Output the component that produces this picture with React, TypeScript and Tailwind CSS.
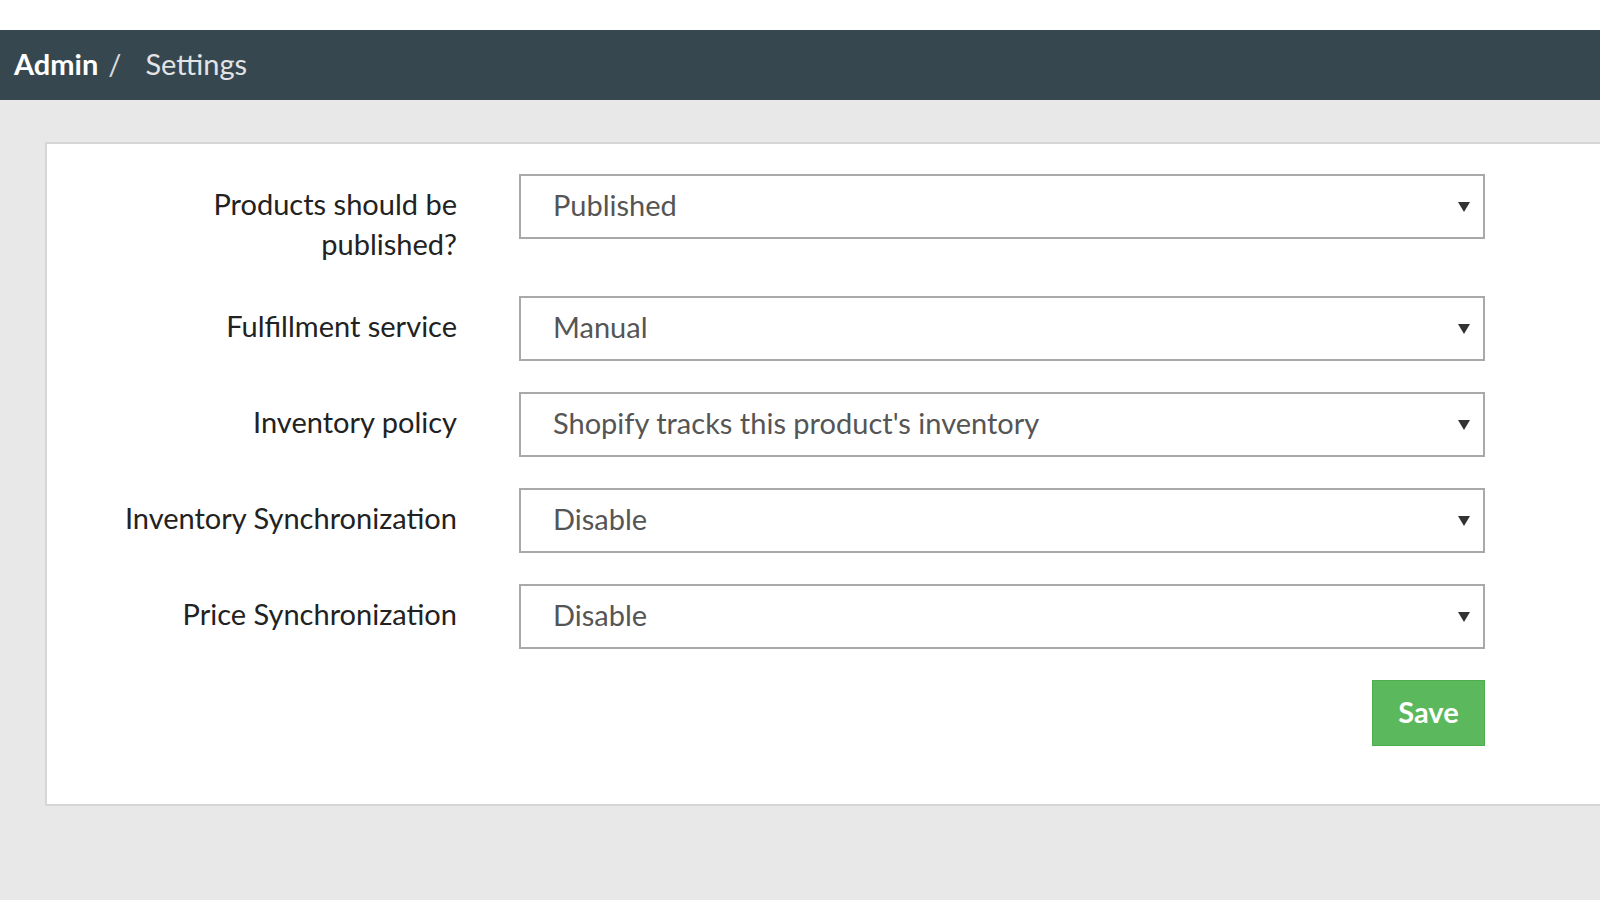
import { useState } from 'react'

const FIELDS: { label: string; options: string[] }[] = [
  { label: 'Products should be published?', options: ['Published', 'Unpublished'] },
  { label: 'Fulfillment service', options: ['Manual'] },
  {
    label: 'Inventory policy',
    options: ["Shopify tracks this product's inventory", "Don't track inventory"],
  },
  { label: 'Inventory Synchronization', options: ['Disable', 'Enable'] },
  { label: 'Price Synchronization', options: ['Disable', 'Enable'] },
]

function SelectField({ options }: { options: string[] }) {
  const [value, setValue] = useState(options[0])
  return (
    <div className="relative h-[65px] w-[966px] shrink-0 border-2 border-[#a9a9a9] bg-white">
      <select
        value={value}
        onChange={(e) => setValue(e.target.value)}
        className="h-full w-full appearance-none bg-transparent pb-[4px] pl-[32px] pr-[50px] text-[29px] text-[#555] outline-none"
      >
        {options.map((o) => (
          <option key={o}>{o}</option>
        ))}
      </select>
      {/* caret */}
      <svg
        className="pointer-events-none absolute right-[13px] top-[26px]"
        width="12"
        height="10"
        viewBox="0 0 12 10"
      >
        <path d="M0 0 L12 0 L6 10 Z" fill="#333" />
      </svg>
    </div>
  )
}

export default function App() {
  return (
    <div
      className="min-h-[900px] overflow-hidden bg-[#e8e8e8]"
      style={{ fontFamily: 'Lato, "Open Sans", sans-serif' }}
    >
      <div className="h-[30px] bg-white" />
      <header className="flex h-[70px] items-center bg-[#37474f] pb-[2px] pl-[14px] text-[29px]">
        <span className="font-bold text-white">Admin</span>
        <span className="ml-[10px] text-[#d8dcde]">/</span>
        <span className="ml-[24px] text-[#e2e4e5]">Settings</span>
      </header>

      <div className="ml-[45px] mt-[42px] w-[1600px] border-y-2 border-l-2 border-[#d6d6d6] bg-white pb-[58px] pt-[30px]">
        <div className="flex flex-col gap-[31px]">
          {FIELDS.map((f) => (
            <div key={f.label} className="flex items-start">
              <label className="w-[410px] shrink-0 pb-[1px] pt-[10px] text-right text-[29px] leading-[40px] text-[#222]">
                {f.label === 'Products should be published?' ? (
                  <>
                    Products should be
                    <br />
                    published?
                  </>
                ) : (
                  f.label
                )}
              </label>
              <div className="ml-[62px]">
                <SelectField options={f.options} />
              </div>
            </div>
          ))}
          <div className="flex w-[1438px] justify-end">
            <button
              type="button"
              className="h-[66px] w-[113px] border border-[#4cae4c] bg-[#5cb85c] pb-[2px] text-[29px] font-bold text-white"
            >
              Save
            </button>
          </div>
        </div>
      </div>
    </div>
  )
}
